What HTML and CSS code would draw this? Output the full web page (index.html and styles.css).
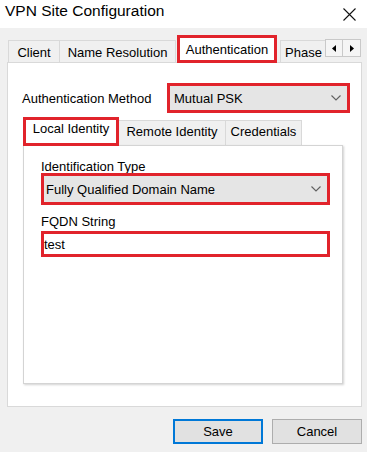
FILE: index.html
```html
<!DOCTYPE html>
<html>
<head>
<meta charset="utf-8">
<link rel="stylesheet" href="styles.css">
</head>
<body>
<div class="window">
  <div class="titlebar">
    <span class="title">VPN Site Configuration</span>
    <svg class="close" width="13" height="13" viewBox="0 0 13 13"><path d="M0.5 0.5 L12.5 12.5 M12.5 0.5 L0.5 12.5" stroke="#111" stroke-width="1.1" fill="none"/></svg>
  </div>
  <div class="main">
    <div class="tabs">
      <div class="tab tab-client">Client</div>
      <div class="tab tab-name">Name Resolution</div>
      <div class="tab tab-active mark">Authentication</div>
      <div class="tab tab-phase">Phase</div>
      <div class="scroll">
        <span class="arrow"><svg width="4" height="7" viewBox="0 0 4 7"><path d="M4 0 L0 3.5 L4 7 Z" fill="#000"/></svg></span>
        <span class="arrow"><svg width="4" height="7" viewBox="0 0 4 7"><path d="M0 0 L4 3.5 L0 7 Z" fill="#000"/></svg></span>
      </div>
    </div>
    <div class="panel">
      <div class="method-row">
        <span class="label">Authentication Method</span>
        <div class="combo combo-method mark">
          <span class="combo-text">Mutual PSK</span>
          <svg class="chev" width="10" height="6" viewBox="0 0 10 6"><path d="M0.5 0.5 L5 5 L9.5 0.5" stroke="#606060" stroke-width="1.1" fill="none"/></svg>
        </div>
      </div>
      <div class="subtabs">
        <div class="subtab subtab-active mark">Local Identity</div>
        <div class="subtab subtab-remote">Remote Identity</div>
        <div class="subtab subtab-cred">Credentials</div>
      </div>
      <div class="subpanel">
        <div class="field-label first">Identification Type</div>
        <div class="combo combo-id mark">
          <span class="combo-text">Fully Qualified Domain Name</span>
          <svg class="chev" width="10" height="6" viewBox="0 0 10 6"><path d="M0.5 0.5 L5 5 L9.5 0.5" stroke="#606060" stroke-width="1.1" fill="none"/></svg>
        </div>
        <div class="field-label second">FQDN String</div>
        <div class="textbox mark">test</div>
      </div>
    </div>
    <div class="buttons">
      <div class="btn btn-default">Save</div>
      <div class="btn">Cancel</div>
    </div>
  </div>
</div>
</body>
</html>
```
FILE: styles.css
```css
* { box-sizing: border-box; }
html, body { margin: 0; padding: 0; }
body {
  width: 367px;
  height: 452px;
  overflow: hidden;
  background: #f0f0f0;
  font-family: "Liberation Sans", Arial, sans-serif;
  font-size: 13px;
  line-height: 15px;
  color: #000;
}
.window { width: 367px; height: 452px; display: flex; flex-direction: column; }
.titlebar {
  height: 28px;
  background: #fff;
  display: flex;
  align-items: flex-start;
  justify-content: space-between;
  padding: 2px 11px 0 5px;
}
.title { font-size: 15.5px; line-height: 18px; }
.close { margin-top: 6px; }

.main { flex: 1; padding: 12px 5px 0 7px; display: flex; flex-direction: column; }

.mark { border: 3px solid #e1232b !important; }

.tabs { height: 22px; display: flex; align-items: flex-end; padding-left: 1px; }
.tab {
  height: 22px;
  border: 1px solid #d9d9d9;
  border-bottom: none;
  background: #f0f0f0;
  padding-top: 4px;
  text-align: center;
  white-space: nowrap;
}
.tab-client { width: 52px; }
.tab-name { width: 116px; border-left: none; }
.tab-active {
  width: 100px;
  height: 28px;
  margin-left: 1px;
  margin-bottom: -1px;
  background: #fff;
  padding-top: 4px;
  position: relative;
  z-index: 2;
}
.tab-phase {
  width: 45px;
  margin-left: 3px;
  border-right: none;
  text-align: left;
  padding-left: 4px;
}
.scroll { display: flex; align-self: flex-start; margin-top: -1px; }
.arrow {
  width: 18px;
  height: 18px;
  border: 1px solid #c9c9c9;
  background: #f5f5f5;
  display: flex;
  align-items: center;
  justify-content: center;
}
.arrow + .arrow { border-left: none; }

.panel {
  width: 355px;
  height: 345px;
  background: #fff;
  border: 1px solid #d9d9d9;
  display: flex;
  flex-direction: column;
  position: relative;
  z-index: 1;
}
.method-row {
  display: flex;
  align-items: center;
  margin-top: 20px;
  padding-left: 14px;
}
.label { width: 145px; }
.combo {
  background: #e5e5e5;
  display: flex;
  align-items: center;
  justify-content: space-between;
}
.combo-method { width: 183px; height: 30px; padding: 0 6px 0 4px; }
.chev { flex: none; }

.subtabs {
  height: 28px;
  margin-top: 4px;
  padding-left: 15px;
  display: flex;
  align-items: flex-end;
}
.subtab {
  height: 25px;
  border: 1px solid #d9d9d9;
  border-bottom: none;
  background: #f0f0f0;
  padding-top: 3px;
  text-align: center;
  white-space: nowrap;
}
.subtab-active {
  width: 96px;
  height: 29px;
  margin-bottom: -1px;
  background: #fff;
  padding-top: 1px;
  position: relative;
  z-index: 2;
}
.subtab-remote { width: 107px; border-left: none; }
.subtab-cred { width: 76px; border-left: none; }

.subpanel {
  margin-left: 15px;
  width: 320px;
  height: 239px;
  border: 1px solid #d4d4d4;
  box-shadow: 1px 1px 2px rgba(0,0,0,0.18);
  background: #fff;
  padding-left: 17px;
  display: flex;
  flex-direction: column;
}
.field-label { line-height: 13px; height: 13px; }
.field-label.first { margin-top: 14px; }
.combo-id { width: 289px; height: 32px; padding: 0 6px 0 2px; }
.field-label.second { margin-top: 10px; }
.textbox {
  margin-top: 3px;
  width: 289px;
  height: 26px;
  background: #fff;
  display: flex;
  align-items: center;
  padding-left: 0;
}

.buttons {
  display: flex;
  justify-content: flex-end;
  gap: 9px;
  margin-top: 12px;
}
.btn {
  width: 90px;
  height: 25px;
  background: #e1e1e1;
  border: 1px solid #adadad;
  display: flex;
  align-items: center;
  justify-content: center;
}
.btn-default { border: 2px solid #0078d7; }
```
